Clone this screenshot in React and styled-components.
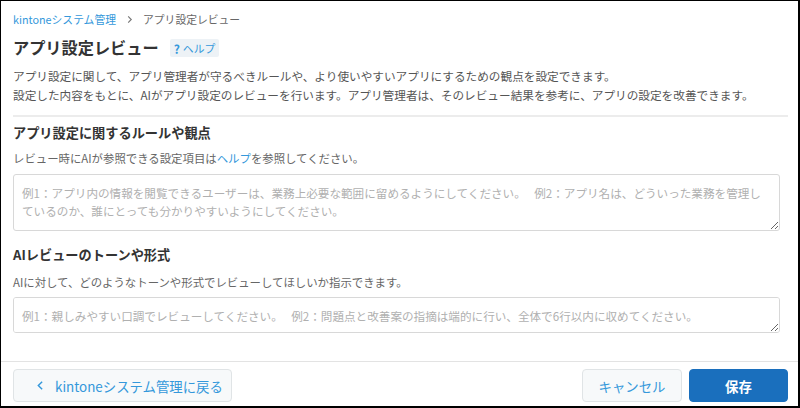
import React from 'react'
import styled, { createGlobalStyle } from 'styled-components'

const GlobalStyle = createGlobalStyle`
  html, body {
    margin: 0;
    padding: 0;
    background: #fff;
  }
  * {
    box-sizing: border-box;
  }
`

const Frame = styled.div`
  width: 800px;
  height: 408px;
  display: flex;
  flex-direction: column;
  border-style: solid;
  border-color: #000;
  border-width: 1px 2px 2px 1px;
  font-family: "Noto Sans CJK JP", "Noto Sans", sans-serif;
  color: #333;
  overflow: hidden;
`

/* main area */
const Main = styled.div`
  flex: 1;
  display: flex;
  flex-direction: column;
  padding: 0 10px 0 12px;
`

const Breadcrumb = styled.nav`
  display: flex;
  align-items: center;
  gap: 10px;
  margin-top: 10px;
  height: 16px;
  font-size: 10.8px;
  line-height: 16px;
`

const CrumbLink = styled.a`
  color: #3498db;
  text-decoration: none;
`

const CrumbCurrent = styled.span`
  color: #666;
`

const TitleRow = styled.div`
  display: flex;
  align-items: center;
  gap: 11px;
  margin-top: 8px;
  height: 24px;
`

const Title = styled.h1`
  margin: 0;
  font-size: 16.2px;
  font-weight: 700;
  line-height: 24px;
  color: #333;
`

const HelpBadge = styled.a`
  display: inline-flex;
  align-items: center;
  gap: 3px;
  height: 18px;
  padding: 0 4px 0 4px;
  margin-top: 2px;
  background: #edf2f6;
  border-radius: 2px;
  color: #3498db;
  font-size: 10.8px;
  text-decoration: none;
`

const Q = styled.span`
  font-weight: 700;
  font-size: 12px;
`

const Desc = styled.p`
  margin: 7px 0 0;
  font-size: 11.65px;
  line-height: 19px;
  color: #555;
`

const Divider = styled.hr`
  margin: 11px 0 0;
  border: none;
  height: 2px;
  background: #ececec;
`

const SectionTitle = styled.h2`
  margin: ${p => p.$top}px 0 0;
  font-size: 13.2px;
  font-weight: 700;
  line-height: 20px;
  color: #333;
`

const SubText = styled.p`
  margin: ${p => p.$top}px 0 0;
  font-size: 11.4px;
  line-height: 18px;
  color: #666;
`

const Link = styled.a`
  color: #3498db;
  text-decoration: none;
`

const TextArea = styled.textarea`
  display: block;
  width: 767px;
  height: ${p => p.$h}px;
  margin-top: ${p => p.$top}px;
  padding: 9px 4px 8px 8px;
  border: 1px solid #d8d8d8;
  border-radius: 3px;
  font-family: "Noto Sans CJK JP", "Noto Sans", sans-serif;
  font-size: 11.6px;
  line-height: 18px;
  color: #333;
  background: #fff;
  &::placeholder {
    color: #b0b0b0;
  }
`

/* footer */
const Footer = styled.div`
  display: flex;
  align-items: flex-start;
  justify-content: space-between;
  height: 45px;
  padding: 7px 10px 0 12px;
  border-top: 1px solid #e3e3e3;
`

const Right = styled.div`
  display: flex;
  gap: 7px;
`

const Button = styled.button`
  display: inline-flex;
  align-items: center;
  gap: 10px;
  height: 33px;
  width: ${p => p.$w}px;
  padding: ${p => (p.$back ? '0 0 0 22px' : '0')};
  justify-content: ${p => (p.$back ? 'flex-start' : 'center')};
  border-radius: 4px;
  border: 1px solid ${p => (p.$primary ? '#1a6fbd' : '#e0e4e6')};
  background: ${p => (p.$primary ? '#1a6fbd' : '#f7f9fa')};
  color: ${p => (p.$primary ? '#fff' : '#3498db')};
  font-family: "Noto Sans CJK JP", "Noto Sans", sans-serif;
  font-size: 13.4px;
  font-weight: ${p => (p.$primary ? 700 : 400)};
  cursor: pointer;
`

const Chevron = ({ dir = 'right', color, size = 8 }) => (
  <svg width={size} height={size + 2} viewBox="0 0 8 10" fill="none">
    <path
      d={dir === 'right' ? 'M2.5 1.5 L6 5 L2.5 8.5' : 'M5.5 1.5 L2 5 L5.5 8.5'}
      stroke={color}
      strokeWidth="1.3"
    />
  </svg>
)

const rulePlaceholder =
  '例1：アプリ内の情報を閲覧できるユーザーは、業務上必要な範囲に留めるようにしてください。　 例2：アプリ名は、どういった業務を管理し\nているのか、誰にとっても分かりやすいようにしてください。'

const tonePlaceholder =
  '例1：親しみやすい口調でレビューしてください。　 例2：問題点と改善案の指摘は端的に行い、全体で6行以内に収めてください。'

export default function App() {
  return (
    <>
      <GlobalStyle />
      <Frame>
        <Main>
          <Breadcrumb>
            <CrumbLink href="#">kintoneシステム管理</CrumbLink>
            <Chevron color="#777" size={7} />
            <CrumbCurrent>アプリ設定レビュー</CrumbCurrent>
          </Breadcrumb>
          <TitleRow>
            <Title>アプリ設定レビュー</Title>
            <HelpBadge href="#">
              <Q>?</Q>ヘルプ
            </HelpBadge>
          </TitleRow>
          <Desc>
            アプリ設定に関して、アプリ管理者が守るべきルールや、より使いやすいアプリにするための観点を設定できます。
            <br />
            設定した内容をもとに、AIがアプリ設定のレビューを行います。アプリ管理者は、そのレビュー結果を参考に、アプリの設定を改善できます。
          </Desc>
          <Divider />

          <SectionTitle $top={6}>アプリ設定に関するルールや観点</SectionTitle>
          <SubText $top={6}>
            レビュー時にAIが参照できる設定項目は<Link href="#">ヘルプ</Link>を参照してください。
          </SubText>
          <TextArea $top={7} $h={57} placeholder={rulePlaceholder} />

          <SectionTitle $top={14}>AIレビューのトーンや形式</SectionTitle>
          <SubText $top={8}>AIに対して、どのようなトーンや形式でレビューしてほしいか指示できます。</SubText>
          <TextArea $top={6} $h={36} placeholder={tonePlaceholder} />
        </Main>
        <Footer>
          <Button $w={219} $back>
            <Chevron dir="left" color="#3498db" size={9} />
            kintoneシステム管理に戻る
          </Button>
          <Right>
            <Button $w={100}>キャンセル</Button>
            <Button $w={99} $primary>保存</Button>
          </Right>
        </Footer>
      </Frame>
    </>
  )
}
